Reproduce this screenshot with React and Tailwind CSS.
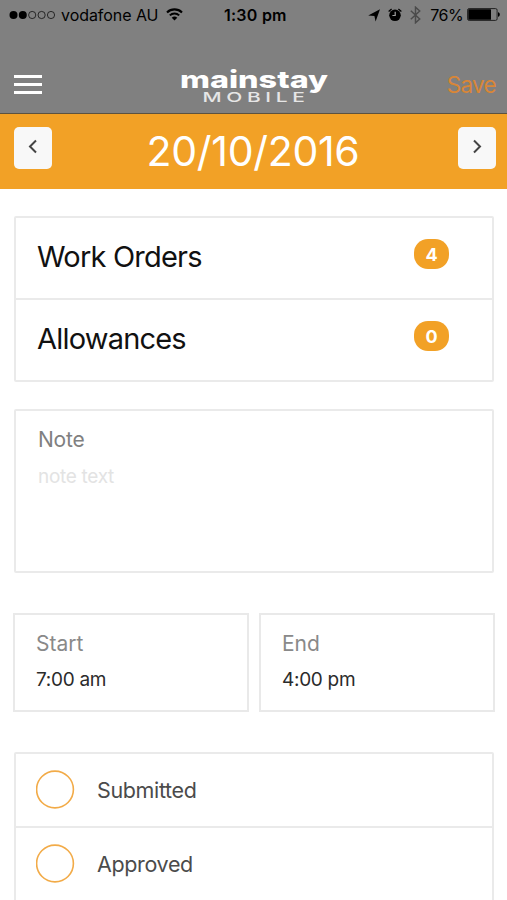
import { useState } from "react";

const ORDERS = [
  { label: "Work Orders", count: 4 },
  { label: "Allowances", count: 0 },
];

function StatusBar() {
  return (
    <div className="flex h-[30px] items-center pl-[9px] pr-[7px] text-[16px] leading-none text-black">
      <div className="flex w-[214px] items-center">
        <svg width="47" height="10" viewBox="0 0 47 10" className="mr-[5px]">
          <circle cx="4.5" cy="5" r="4" />
          <circle cx="13.8" cy="5" r="4" />
          {[23.2, 32.6, 42].map((cx) => (
            <circle key={cx} cx={cx} cy="5" r="3.6" fill="none" stroke="black" strokeWidth="0.7" />
          ))}
        </svg>
        <span className="tracking-[-0.05px]">vodafone AU</span>
        <svg width="17" height="13" viewBox="0 0 17 13" className="-mt-px ml-[8px]" fill="none" stroke="black">
          <path d="M1 4.4a10.8 10.8 0 0 1 15 0" strokeWidth="2.1" />
          <path d="M3.8 7.4a6.8 6.8 0 0 1 9.4 0" strokeWidth="2" />
          <path d="M8.5 12.6 5.7 9.8a4 4 0 0 1 5.6 0z" fill="black" stroke="none" />
        </svg>
      </div>
      <span className="ml-px font-semibold tracking-[0.25px]">1:30 pm</span>
      <div className="ml-auto flex items-center">
        <svg width="12" height="13" viewBox="0 0 12 13">
          <path d="M12 .3 7.6 12.6 6.4 6.9.2 6.4z" />
        </svg>
        <svg width="14" height="14" viewBox="0 0 14 14" className="-mt-px ml-[8px]">
          <circle cx="7" cy="7.3" r="5.8" />
          <path d="M.6 3.4 3.6 1M13.4 3.4 10.4 1" stroke="black" strokeWidth="1.3" />
          <path d="M7.2 3.8v3.7H4.4" fill="none" stroke="#a0a0a0" strokeWidth="1.2" />
        </svg>
        <svg width="11" height="18" viewBox="0 0 11 18" className="ml-[8px]" fill="none" stroke="#4b4b4b" strokeWidth="1.5">
          <path d="M.8 4.8l8.9 8.2-4.2 3.8V1.2L9.7 5 .8 13.2" />
        </svg>
        <span className="ml-[9px] tracking-[-0.6px]">76%</span>
        <svg width="34" height="13" viewBox="0 0 34 13" className="-mt-px ml-[4px] -mr-px">
          <rect x=".6" y=".6" width="29.5" height="11.8" rx="1.5" fill="none" stroke="#222" strokeWidth="1" />
          <rect x="1.3" y="1.3" width="22.7" height="10.4" rx=".5" />
          <path d="M31 4.2c2.4.4 2.4 4.2 0 4.6z" />
        </svg>
      </div>
    </div>
  );
}

function Logo() {
  return (
    <svg width="150" height="40" viewBox="0 0 150 40" fill="white">
      <text x="0" y="23" fontSize="24" fontWeight="800" textLength="148" lengthAdjust="spacingAndGlyphs">
        mainstay
      </text>
      <g transform="translate(22.5 37) scale(1.55 1)">
        <text x="0" y="0" fontSize="13.5" fontWeight="500" fill="#e6e6e6" textLength="66">
          MOBILE
        </text>
      </g>
    </svg>
  );
}

function ArrowButton({ path }) {
  return (
    <button className="flex h-[42px] w-[38px] justify-center rounded-[5px] bg-[#f8f8f8] pt-[12px]">
      <svg width="10" height="15" viewBox="0 0 10 15" fill="none" stroke="#444" strokeWidth="2">
        <path d={path} />
      </svg>
    </button>
  );
}

function TimeBox({ label, value }) {
  return (
    <div className="h-[99px] w-[236px] border-2 border-[#e9e9e9] pl-[21px] pt-[14px]">
      <div className="text-[21px] leading-[30px] text-[#898989]">{label}</div>
      <div className="mt-[7px] text-[19px] leading-[28px] tracking-[-0.3px] text-[#2b2b2b]">{value}</div>
    </div>
  );
}

function CheckRow({ label, checked, onToggle }) {
  return (
    <button onClick={onToggle} className="flex h-[74px] w-full items-center border-b-2 border-[#eaeaea] pl-[20px] text-left">
      <svg width="39" height="39" viewBox="0 0 39 39" className="-mt-px">
        <circle cx="19" cy="19.5" r="18.4" fill={checked ? "#f2a126" : "white"} stroke="#f2ab48" strokeWidth="1.6" />
      </svg>
      <span className="ml-[22px] pt-[2px] text-[21.5px] leading-none tracking-[-0.35px] text-[#4b4b4b]">{label}</span>
    </button>
  );
}

export default function App() {
  const [status, setStatus] = useState({ Submitted: false, Approved: false });

  return (
    <div className="h-[900px] w-full overflow-hidden bg-white font-['Inter',sans-serif]">
      <header className="h-[114px] border-b border-[#5c5240] bg-[#808080]">
        <StatusBar />
        <div className="flex items-start pl-[14px] pr-[11px] pt-[35px]">
          <div className="mt-[10px] flex w-[28px] flex-col gap-[5px]">
            <div className="h-[3px] bg-white" />
            <div className="h-[3px] bg-white" />
            <div className="h-[3px] bg-white" />
          </div>
          <div className="ml-[138px]">
            <Logo />
          </div>
          <span className="ml-auto mt-[5px] text-[22.5px] leading-[30px] tracking-[-0.7px] text-[#d98637]">Save</span>
        </div>
      </header>

      <div className="flex h-[75px] justify-between bg-[#f2a126] pl-[14px] pr-[11px] pt-[13px]">
        <ArrowButton path="M8 1.5 2 7.5l6 6" />
        <h1 className="-ml-[4px] text-[41px] leading-[48px] tracking-[-0.3px] text-white">20/10/2016</h1>
        <ArrowButton path="M2 1.5l6 6-6 6" />
      </div>

      <main className="pl-[14px] pr-[13px] pt-[27px]">
        <section className="rounded-[2px] border-2 border-[#eaeaea]">
          {ORDERS.map((o, i) => (
            <div
              key={o.label}
              className={"flex justify-between pl-[21px] pr-[43px] " + (i === 0 ? "h-[82px] border-b-2 border-[#eaeaea]" : "h-[80px]")}
            >
              <span className="pt-[21px] text-[29px] leading-[36px] tracking-[-0.8px] text-[#111]">{o.label}</span>
              <span className="mt-[21px] flex h-[30px] w-[35px] items-center justify-center rounded-[14px] bg-[#f2a126] text-[18px] font-bold text-white">
                {o.count}
              </span>
            </div>
          ))}
        </section>

        <section className="mt-[27px] h-[164px] rounded-[2px] border-2 border-[#eaeaea] pl-[22px] pt-[14px]">
          <div className="text-[21px] leading-[30px] tracking-[-0.2px] text-[#808080]">Note</div>
          <textarea
            placeholder="note text"
            className="mt-[8px] block h-[90px] w-[430px] resize-none text-[19px] leading-[28px] tracking-[-0.3px] outline-none placeholder:text-[#e3e3e3]"
          />
        </section>

        <div className="-mx-px mt-[40px] flex gap-[10px]">
          <TimeBox label="Start" value="7:00 am" />
          <TimeBox label="End" value="4:00 pm" />
        </div>

        <section className="mt-[40px] rounded-[2px] border-2 border-[#eaeaea]">
          {Object.keys(status).map((k) => (
            <CheckRow
              key={k}
              label={k}
              checked={status[k]}
              onToggle={() => setStatus((prev) => ({ ...prev, [k]: !prev[k] }))}
            />
          ))}
        </section>
      </main>
    </div>
  );
}
